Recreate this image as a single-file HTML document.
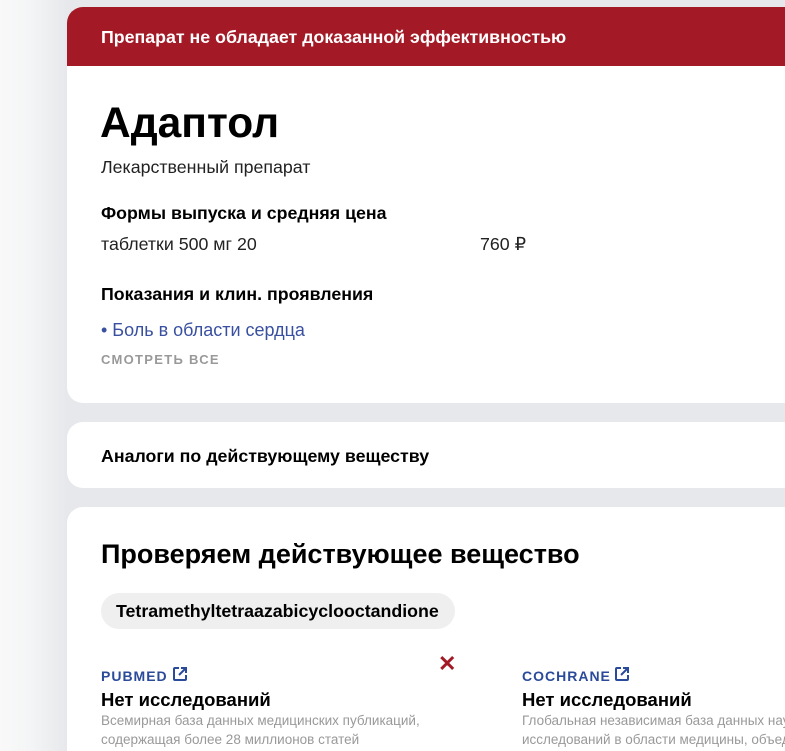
<!DOCTYPE html>
<html><head><meta charset="utf-8"><style>
*{margin:0;padding:0;box-sizing:border-box}
html,body{width:785px;height:751px;overflow:hidden}
body{font-family:"Liberation Sans",sans-serif;color:#000}
#w{position:relative;width:785px;height:751px;overflow:hidden;background:linear-gradient(to right,#f9f9f9 0,#f4f5f6 30px,#e6e8eb 67px,#e6e8eb 100%)}
.card{position:absolute;left:67px;width:718px;background:#fff;border-radius:16px 0 0 16px;overflow:hidden}
.t{position:absolute;white-space:nowrap}
.b{font-weight:bold}
</style></head><body><div id="w">
<div class="card" style="top:7px;height:396px">
  <div style="height:59px;background:#a31a26"></div>
</div>
<div class="t b" style="left:101px;top:27px;font-size:17.8px;color:#fff">Препарат не обладает доказанной эффективностью</div>
<div class="t b" style="left:100px;top:100px;font-size:42.5px">Адаптол</div>
<div class="t" style="left:101px;top:157px;font-size:17.8px;color:#222">Лекарственный препарат</div>
<div class="t b" style="left:101px;top:203px;font-size:17.8px">Формы выпуска и средняя цена</div>
<div class="t" style="left:101px;top:234px;font-size:17.8px;color:#222">таблетки 500 мг 20</div>
<div class="t" style="left:480px;top:234px;font-size:17.8px;color:#222">760 ₽</div>
<div class="t b" style="left:101px;top:284px;font-size:17.8px">Показания и клин. проявления</div>
<div class="t" style="left:101px;top:320px;font-size:18px;color:#3950a0">• Боль в области сердца</div>
<div class="t b" style="left:101px;top:352px;font-size:13px;color:#999;letter-spacing:1.3px">СМОТРЕТЬ ВСЕ</div>

<div class="card" style="top:422px;height:66px"></div>
<div class="t b" style="left:101px;top:446px;font-size:17.8px">Аналоги по действующему веществу</div>

<div class="card" style="top:507px;height:260px"></div>
<div class="t b" style="left:101px;top:539px;font-size:27px">Проверяем действующее вещество</div>
<div style="position:absolute;left:101px;top:593px;width:354px;height:36px;border-radius:18px;background:#efefef"></div>
<div class="t b" style="left:116px;top:601px;font-size:17.8px">Tetramethyltetraazabicyclooctandione</div>

<div class="t b" style="left:101px;top:668px;font-size:14px;color:#2a4a9a;letter-spacing:1px">PUBMED</div>
<svg style="position:absolute;left:172px;top:666px" width="16" height="16" viewBox="0 0 16 16" fill="none" stroke="#2a4a9a" stroke-width="2"><path d="M7 2H3a1 1 0 0 0-1 1v10a1 1 0 0 0 1 1h10a1 1 0 0 0 1-1V9"/><path d="M9 2h5v5M14 2L7 9"/></svg>
<div class="t b" style="left:438px;top:651px;font-size:22px;color:#a31a26">✕</div>
<div class="t b" style="left:101px;top:689px;font-size:18.5px">Нет исследований</div>
<div class="t" style="left:101px;top:713px;font-size:13.5px;color:#999">Всемирная база данных медицинских публикаций,</div>
<div class="t" style="left:101px;top:732px;font-size:13.5px;color:#999">содержащая более 28 миллионов статей</div>

<div class="t b" style="left:522px;top:668px;font-size:14px;color:#2a4a9a;letter-spacing:1px">COCHRANE</div>
<svg style="position:absolute;left:614px;top:666px" width="16" height="16" viewBox="0 0 16 16" fill="none" stroke="#2a4a9a" stroke-width="2"><path d="M7 2H3a1 1 0 0 0-1 1v10a1 1 0 0 0 1 1h10a1 1 0 0 0 1-1V9"/><path d="M9 2h5v5M14 2L7 9"/></svg>
<div class="t b" style="left:522px;top:689px;font-size:18.5px">Нет исследований</div>
<div class="t" style="left:522px;top:713px;font-size:13.5px;color:#999">Глобальная независимая база данных научных</div>
<div class="t" style="left:522px;top:732px;font-size:13.5px;color:#999">исследований в области медицины, объединяющая</div>
</div></body></html>
